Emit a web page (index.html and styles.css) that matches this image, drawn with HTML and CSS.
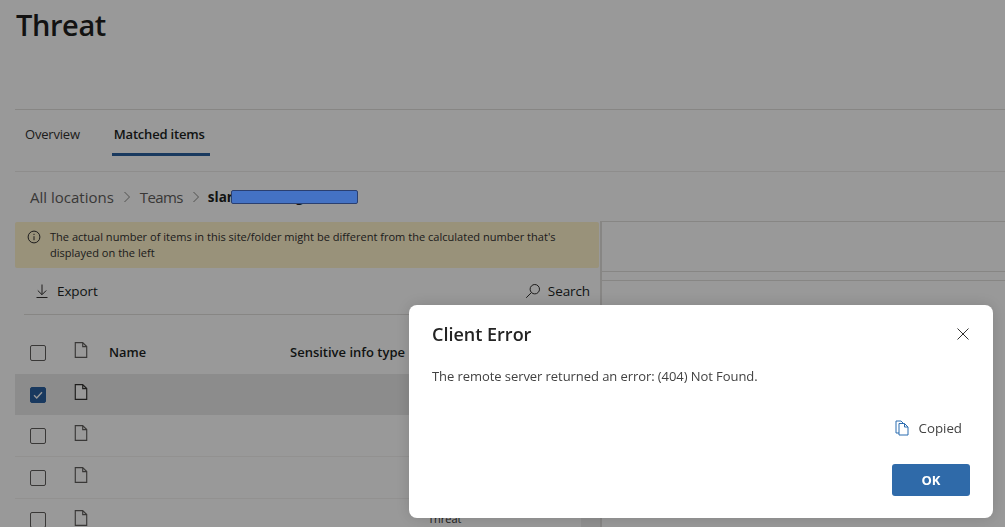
FILE: index.html
```html
<!DOCTYPE html>
<html lang="en">
<head>
<meta charset="utf-8">
<title>Threat</title>
<link rel="stylesheet" href="styles.css">
</head>
<body>
<div class="page">
  <header class="page-head"><h1 class="title">Threat</h1></header>
  <nav class="tabs">
    <a class="tab">Overview</a>
    <a class="tab tab-active">Matched items</a>
  </nav>
  <div class="crumbs">
    <span>All locations</span>
    <svg class="chev" viewBox="0 0 8 12"><path d="M1.500 1l5 5-5 5"/></svg>
    <span class="crumb-teams">Teams</span>
    <svg class="chev" viewBox="0 0 8 12"><path d="M1.500 1l5 5-5 5"/></svg>
    <strong class="crumb-current">slar<span class="crumb-tail">g</span></strong>
  </div>
  <div class="split">
    <section class="list">
      <div class="banner">
        <svg class="info" viewBox="0 0 14 14"><circle cx="7" cy="7" r="5.900"/><path d="M7 6.200v4M7 3.800v1.200"/></svg>
        <p>The actual number of items in this site/folder might be different from the calculated number that's displayed on the left</p>
      </div>
      <div class="toolbar">
        <span class="tool">
          <svg class="tool-icon" viewBox="0 0 16 16"><path d="M8 1.500v10M3.800 7.500L8 11.700l4.200-4.200M2.500 14.500h11"/></svg>Export
        </span>
        <span class="tool">
          <svg class="tool-icon" viewBox="0 0 16 16"><circle cx="9.800" cy="6.200" r="4.700"/><path d="M6.400 9.600L1.200 14.800"/></svg>Search
        </span>
      </div>
      <div class="row row-head">
        <span class="check"></span>
        <svg class="doc" viewBox="0 0 12 14"><path d="M1 .5h6.500L11 4v9.500H1zM7.500.5V4H11"/></svg>
        <span class="col-name">Name</span>
        <span class="col-type">Sensitive info type</span>
      </div>
      <div class="row row-selected">
        <span class="check check-on"><svg viewBox="0 0 12 12"><path d="M2.600 6.300l2.300 2.300 4.500-5"/></svg></span>
        <svg class="doc doc-dark" viewBox="0 0 12 14"><path d="M1 .5h6.500L11 4v9.500H1zM7.500.5V4H11"/></svg>
      </div>
      <div class="row">
        <span class="check"></span>
        <svg class="doc" viewBox="0 0 12 14"><path d="M1 .5h6.500L11 4v9.500H1zM7.500.5V4H11"/></svg>
      </div>
      <div class="row">
        <span class="check"></span>
        <svg class="doc" viewBox="0 0 12 14"><path d="M1 .5h6.500L11 4v9.500H1zM7.500.5V4H11"/></svg>
      </div>
      <div class="row row-last">
        <span class="check"></span>
        <svg class="doc" viewBox="0 0 12 14"><path d="M1 .5h6.500L11 4v9.500H1zM7.500.5V4H11"/></svg>
        <span class="col-type-cell">Threat</span>
        <span class="row-end"></span>
      </div>
    </section>
    <aside class="detail">
      <div class="detail-top"></div>
      <div class="detail-strip"></div>
    </aside>
  </div>
</div>
<div class="scrim"></div>
<div class="redaction"></div>
<div class="dialog" role="dialog">
  <div class="dialog-head">
    <h2 class="dialog-title">Client Error</h2>
    <svg class="close" viewBox="0 0 12 12"><path d="M.5.5l11 11M11.500.5l-11 11"/></svg>
  </div>
  <p class="dialog-msg">The remote server returned an error: (404) Not Found.</p>
  <div class="copied">
    <svg class="copy-icon" viewBox="0 0 14 16"><path class="copy-back" d="M4 13H1V1h5l2 2"/><path class="copy-front" d="M4 3.500h5.500L13 7v8H4zM9.500 3.500V7H13"/></svg>
    <span>Copied</span>
  </div>
  <div class="dialog-foot"><button class="ok">OK</button></div>
</div>
</body>
</html>
```
FILE: styles.css
```css
* { box-sizing: border-box; }
html, body { margin: 0; height: 100%; overflow: hidden; }
body { font-family: "Open Sans", "Noto Sans", "Liberation Sans", sans-serif; color: #201f1e; background: #fff; }
.page { height: 527px; overflow: hidden; padding-left: 15px; }
.page-head { height: 110px; border-bottom: 1px solid #e1dfdd; }
.title { margin: 0; font-size: 29px; line-height: 50px; font-weight: 600; letter-spacing: -0.4px; padding-left: 1px; }
.tabs { display: flex; height: 62px; border-bottom: 1px solid #edebe9; padding-left: 10px; gap: 32px; }
.tab { font-size: 13px; line-height: 49px; height: 46px; color: #323130; letter-spacing: -0.2px; }
.tab-active { font-weight: 600; color: #201f1e; border-bottom: 3px solid #2b5f9e; width: 98px; padding-left: 2px; }
.crumbs { display: flex; align-items: center; height: 50px; padding-left: 15px; font-size: 15px; color: #605e5c; }
.crumb-teams { letter-spacing: -0.6px; }
.chev { width: 8px; height: 12px; margin: 0 9px; fill: none; stroke: #8a8886; stroke-width: 1; }
.crumb-current { color: #201f1e; font-size: 13.500px; font-weight: 700; position: relative; margin-left: -1px; }
.crumb-tail { position: absolute; left: 88px; top: 0; }
.split { display: flex; }
.list { width: 585px; flex: none; }
.banner { display: flex; gap: 9px; height: 46px; background: #fff3cc; padding: 7px 8px 0 12px; font-size: 11.050px; line-height: 16px; color: #323130; border-radius: 2px; margin-right: 1px; }
.banner p { margin: 0; width: 530px; }
.info { width: 14px; height: 14px; margin-top: 1px; flex: none; fill: none; stroke: #323130; stroke-width: 1; }
.toolbar { display: flex; justify-content: space-between; align-items: center; height: 47px; margin-left: 9px; padding: 0 10px; border-bottom: 1px solid #e1dfdd; font-size: 13.500px; color: #201f1e; font-weight: 500; letter-spacing: -0.1px; }
.tool { display: flex; align-items: center; gap: 7px; }
.tool-icon { width: 16px; height: 16px; fill: none; stroke: #323130; stroke-width: 1; }
.row { display: flex; align-items: center; height: 42px; border-bottom: 1px solid #f3f2f1; padding-left: 15px; position: relative; }
.row-head { height: 59px; padding-top: 16px; border-bottom: 0; }
.row-selected { height: 41px; background: #e9e9e9; border-bottom: 0; }
.row-last { border-bottom: 0; }
.row-end { position: absolute; right: 0; top: 0; bottom: 0; width: 19px; background: #f0f0f0; }
.check { width: 16px; height: 16px; border: 1px solid #605e5c; border-radius: 2px; flex: none; display: block; }
.check-on { background: #2b5f9e; border-color: #2b5f9e; }
.check-on svg { display: block; width: 14px; height: 14px; fill: none; stroke: #fff; stroke-width: 1.2; }
.doc { width: 14px; height: 16px; margin: -5px 0 0 28px; flex: none; fill: #fff; stroke: #605e5c; stroke-width: 1; }
.doc-dark { stroke: #323130; }
.col-name { margin: 0 0 2px 21px; font-size: 12.800px; font-weight: 600; }
.col-type { position: absolute; left: 275px; top: 28px; font-size: 13px; font-weight: 600; }
.col-type-cell { position: absolute; left: 413px; top: 12px; font-size: 11px; color: #323130; }
.detail { flex: 1; border-left: 2px solid #e1dfdd; border-top: 1px solid #e1dfdd; margin-top: -1px; height: 306px; }
.detail-top { height: 49px; }
.detail-strip { height: 10px; border-top: 1px solid #e1dfdd; border-bottom: 1px solid #e1dfdd; }
.scrim { position: fixed; inset: 0; background: rgba(0, 0, 0, 0.4); }
.redaction { position: fixed; left: 231px; top: 190px; width: 127px; height: 14px; background: #4472c4; border: 1px solid #2a3f70; border-radius: 2px; }
.dialog { position: fixed; left: 409px; top: 305px; width: 584px; height: 213px; background: #fff; border-radius: 8px; box-shadow: 0 0 16px rgba(0,0,0,.15); padding: 0 23px; }
.dialog-head { display: flex; justify-content: space-between; align-items: center; height: 58px; }
.dialog-title { margin: 0; font-size: 18px; font-weight: 600; color: #242424; }
.close { width: 12px; height: 12px; fill: none; stroke: #323130; stroke-width: 1; margin-right: 1px; }
.dialog-msg { margin: 3px 0 0; font-size: 13px; line-height: 20px; color: #424242; letter-spacing: -0.07px; }
.copied { display: flex; justify-content: flex-end; align-items: center; gap: 9px; margin-top: 33px; padding-right: 8px; font-size: 13.300px; color: #424242; }
.copy-icon { width: 14px; height: 16px; fill: none; stroke-width: 1; margin-right: 1px; }
.copy-back, .copy-front { stroke: #2b6cb0; }
.dialog-foot { display: flex; justify-content: flex-end; margin-top: 27px; }
.ok { width: 78px; height: 32px; border: 0; border-radius: 3px; background: #2f6aa9; color: #fff; font: 700 13px "Open Sans", sans-serif; }
```
